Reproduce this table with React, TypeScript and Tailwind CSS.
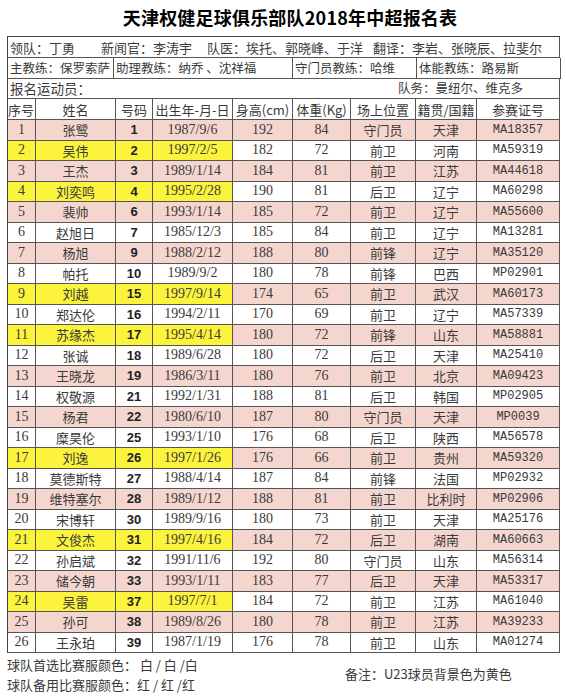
import React from "react";

type Player = [number, string, number, string, number, number, string, string, string, boolean];

const players: Player[] = [
  [1, "张鹭", 1, "1987/9/6", 192, 84, "守门员", "天津", "MA18357", false],
  [2, "吴伟", 2, "1997/2/5", 182, 72, "前卫", "河南", "MA59319", true],
  [3, "王杰", 3, "1989/1/14", 184, 81, "前卫", "江苏", "MA44618", false],
  [4, "刘奕鸣", 4, "1995/2/28", 190, 81, "后卫", "辽宁", "MA60298", true],
  [5, "裴帅", 6, "1993/1/14", 185, 72, "前卫", "辽宁", "MA55600", false],
  [6, "赵旭日", 7, "1985/12/3", 185, 84, "前卫", "辽宁", "MA13281", false],
  [7, "杨旭", 9, "1988/2/12", 188, 80, "前锋", "辽宁", "MA35120", false],
  [8, "帕托", 10, "1989/9/2", 180, 78, "前锋", "巴西", "MP02901", false],
  [9, "刘越", 15, "1997/9/14", 174, 65, "前卫", "武汉", "MA60173", true],
  [10, "郑达伦", 16, "1994/2/11", 170, 69, "前卫", "辽宁", "MA57339", false],
  [11, "苏缘杰", 17, "1995/4/14", 180, 72, "前锋", "山东", "MA58881", true],
  [12, "张诚", 18, "1989/6/28", 180, 72, "后卫", "天津", "MA25410", false],
  [13, "王晓龙", 19, "1986/3/11", 180, 76, "前卫", "北京", "MA09423", false],
  [14, "权敬源", 21, "1992/1/31", 188, 81, "后卫", "韩国", "MP02905", false],
  [15, "杨君", 22, "1980/6/10", 187, 80, "守门员", "天津", "MP0039", false],
  [16, "糜昊伦", 25, "1993/1/10", 176, 68, "后卫", "陕西", "MA56578", false],
  [17, "刘逸", 26, "1997/1/26", 176, 66, "前卫", "贵州", "MA59320", true],
  [18, "莫德斯特", 27, "1988/4/14", 187, 84, "前锋", "法国", "MP02932", false],
  [19, "维特塞尔", 28, "1989/1/12", 188, 81, "前卫", "比利时", "MP02906", false],
  [20, "宋博轩", 30, "1989/9/16", 180, 73, "前卫", "天津", "MA25176", false],
  [21, "文俊杰", 31, "1997/4/16", 184, 72, "后卫", "湖南", "MA60663", true],
  [22, "孙启斌", 32, "1991/11/6", 192, 80, "守门员", "山东", "MA56314", false],
  [23, "储今朝", 33, "1993/1/11", 183, 77, "后卫", "天津", "MA53317", false],
  [24, "吴雷", 37, "1997/7/1", 184, 72, "前卫", "江苏", "MA61040", true],
  [25, "孙可", 38, "1989/8/26", 180, 78, "前卫", "江苏", "MA39233", false],
  [26, "王永珀", 39, "1987/1/19", 176, 78, "前卫", "山东", "MA01274", false],
];

const cols = "grid grid-cols-[28px_80px_37px_80px_60px_58px_65px_61px_83px]";
const cell = "flex items-center justify-center border-r border-b border-[#555] overflow-hidden whitespace-nowrap leading-none";
const serif = "font-['Liberation_Serif','Noto_Sans_CJK_SC',serif] text-[14px]";
const mono = "font-['Liberation_Mono','Noto_Sans_CJK_SC',monospace] text-[12px]";
const cjk = "font-['Noto_Sans_CJK_SC',sans-serif] text-[13px]";
const info = "flex items-center pl-[2px] border-r border-b border-[#555] whitespace-nowrap overflow-hidden leading-none";

export default function App() {
  return (
    <div className="w-[566px] h-[700px] bg-white text-[#3a3a3a] font-['Noto_Sans_CJK_SC',sans-serif]">
      <div className="h-[36px] flex items-center justify-center pl-[14px] pb-[2px]">
        <h1 className="text-[18px] font-bold text-black tracking-[0.2px] leading-none">天津权健足球俱乐部队2018年中超报名表</h1>
      </div>

      <div className="ml-[7px] w-[553px] border-l border-t border-[#444]">
        {/* info rows */}
        <div className={`h-[21px] ${info} text-[13px]`}>
          <span className="w-[91px]">领队：丁勇</span>
          <span className="w-[106px]">新闻官：李涛宇</span>
          <span className="w-[166px]">队医：埃托、郭晓峰、于洋</span>
          <span>翻译：李岩、张晓辰、拉斐尔</span>
        </div>
        <div className="h-[21px] grid grid-cols-[106px_179px_124px_144px] text-[12.5px]">
          <div className={info}>主教练：保罗索萨</div>
          <div className={info}>助理教练：纳乔 、沈祥福</div>
          <div className={info}>守门员教练：哈维</div>
          <div className={info}>体能教练：路易斯</div>
        </div>
        <div className={`h-[20px] ${info} justify-between text-[13.5px] pr-[36px]`}>
          <span>报名运动员：</span>
          <span className="text-[12.5px]">队务：曼纽尔、维克多</span>
        </div>

        {/* header */}
        <div className={`${cols} h-[21px] ${cjk}`}>
          <div className={`${cell} justify-start`}>序号</div>
          <div className={cell}>姓名</div>
          <div className={cell}>号码</div>
          <div className={cell}>出生年-月-日</div>
          <div className={cell}>身高(cm)</div>
          <div className={cell}>体重(Kg)</div>
          <div className={cell}>场上位置</div>
          <div className={cell}>籍贯/国籍</div>
          <div className={cell}>参赛证号</div>
        </div>

        {players.map((p) => {
          const [no, name, num, birth, h, w, pos, home, id, u23] = p;
          const base = no % 2 === 1 ? "bg-[#f5d6ce]" : "bg-white";
          const lead = u23 ? "bg-[#fcf43c]" : base;
          return (
            <div key={no} className={`${cols} h-[20.5px]`}>
              <div className={`${cell} ${lead} ${serif}`}>{no}</div>
              <div className={`${cell} ${lead} ${cjk}`}>{name}</div>
              <div className={`${cell} ${lead} font-['Liberation_Sans',sans-serif] font-bold text-[13px] text-[#222]`}>{num}</div>
              <div className={`${cell} ${lead} ${serif}`}>{birth}</div>
              <div className={`${cell} ${base} ${serif}`}>{h}</div>
              <div className={`${cell} ${base} ${serif}`}>{w}</div>
              <div className={`${cell} ${base} ${cjk}`}>{pos}</div>
              <div className={`${cell} ${base} ${cjk}`}>{home}</div>
              <div className={`${cell} ${base} ${mono}`}>{id}</div>
            </div>
          );
        })}
      </div>

      <div className="flex mt-[2px] pl-[7px] text-[13px]">
        <div className="flex flex-col w-[338px]">
          <div className="h-[20px] flex items-center">球队首选比赛服颜色： 白 / 白 /白</div>
          <div className="h-[20px] flex items-center">球队备用比赛服颜色：红 / 红 /红</div>
        </div>
        <div className="flex items-center pb-[2px]">备注：U23球员背景色为黄色</div>
      </div>
    </div>
  );
}
